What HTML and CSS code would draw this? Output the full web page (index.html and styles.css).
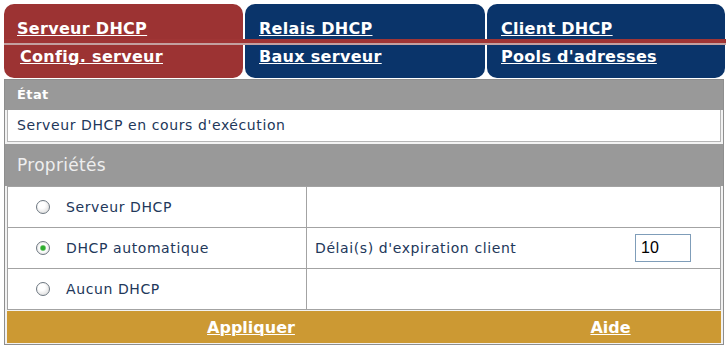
FILE: index.html
```html
<!DOCTYPE html>
<html lang="fr">
<head>
    <meta charset="UTF-8">
    <title>Serveur DHCP</title>
    <link rel="stylesheet" href="styles.css">
</head>
<body>

    <!-- Onglets -->
    <div class="tabs">
        <div class="tab tab-top tab-active"><a href="#">Serveur DHCP</a></div>
        <div class="tab tab-top"><a href="#">Relais DHCP</a></div>
        <div class="tab tab-top"><a href="#">Client DHCP</a></div>
        <div class="tab-line"></div>
        <div class="tab tab-sub tab-active tab-first"><a href="#">Config. serveur</a></div>
        <div class="tab tab-sub"><a href="#">Baux serveur</a></div>
        <div class="tab tab-sub"><a href="#">Pools d'adresses</a></div>
    </div>

    <div class="panel">
        <div class="section-head">État</div>
        <div class="status">Serveur DHCP en cours d'exécution</div>

        <div class="props-head">Propriétés</div>
        <table class="props">
            <colgroup>
                <col class="col-opt">
                <col>
            </colgroup>
            <tr>
                <td class="opt"><label><span class="radio"></span> Serveur DHCP</label></td>
                <td></td>
            </tr>
            <tr>
                <td class="opt"><label><span class="radio checked"></span> DHCP automatique</label></td>
                <td>
                    <div class="field">
                        <span>Délai(s) d'expiration client</span>
                        <input type="text" class="timeout" value="10">
                    </div>
                </td>
            </tr>
            <tr>
                <td class="opt"><label><span class="radio"></span> Aucun DHCP</label></td>
                <td></td>
            </tr>
        </table>

        <div class="actions">
            <a href="#">Appliquer</a>
            <a href="#" class="help">Aide</a>
        </div>
    </div>

</body>
</html>
```

FILE: styles.css
```css
/* Reset */
* {
    margin: 0;
    padding: 0;
    box-sizing: border-box;
}

body {
    font-family: 'DejaVu Sans', Verdana, sans-serif;
    background-color: #ffffff;
    color: #22375a;
    padding-top: 4px;
}

/* Onglets */
.tabs {
    margin-left: 4px;
    width: 720px;
    display: grid;
    grid-template-columns: 239px 240px 238px;
    grid-template-rows: 35px 6px 33px;
    column-gap: 2px;
}

.tab {
    background-color: #0a346a;
    font-weight: bold;
    font-size: 16px;
    line-height: 20px;
    letter-spacing: 0.3px;
    padding-left: 14px;
}

.tab a {
    color: #ffffff;
    text-decoration: underline;
    text-decoration-thickness: 1px;
}

.tab-active {
    background-color: #9c3333;
}

.tab-top {
    border-radius: 10px 10px 0 0;
    padding-top: 15px;
}

.tab-top.tab-active {
    padding-left: 13px;
}

.tab-sub {
    border-radius: 0 0 10px 10px;
    padding-top: 2px;
}

.tab-first {
    padding-left: 16px;
}

.tab-line {
    grid-column: 1 / -1;
    background-color: #a03535;
    border-bottom: 2px solid #c4a0a0;
    margin-right: -1px;
}

/* Panneau principal */
.panel {
    margin: 1px 0 0 4px;
    width: 720px;
    border: 1px solid #8e8e8e;
    background-color: #f2f2f2;
}

.section-head {
    background-color: #999999;
    color: #ffffff;
    font-weight: bold;
    font-size: 13px;
    letter-spacing: 0.4px;
    height: 30px;
    line-height: 30px;
    padding-left: 12px;
}

.status {
    margin: 0 2px 2px;
    background-color: #ffffff;
    border: 1px solid #b5b5b5;
    border-top: none;
    height: 32px;
    line-height: 31px;
    padding-left: 9px;
    font-size: 14px;
    letter-spacing: 0.6px;
}

.props-head {
    background-color: #999999;
    color: #eeeeee;
    font-size: 17px;
    letter-spacing: 0.3px;
    height: 42px;
    line-height: 42px;
    padding-left: 12px;
}

.props {
    margin: 0 2px;
    width: 714px;
    border-collapse: collapse;
    table-layout: fixed;
    background-color: #ffffff;
    font-size: 14px;
    letter-spacing: 0.6px;
}

.col-opt {
    width: 299px;
}

.props td {
    border: 1px solid #a3a3a3;
    height: 41px;
    padding: 0 29px 0 8px;
    vertical-align: middle;
}

.props td.opt {
    padding-left: 28px;
}

.props label {
    display: flex;
    align-items: center;
    gap: 16px;
}

/* Boutons radio */
.radio {
    display: block;
    flex: 0 0 14px;
    width: 14px;
    height: 14px;
    border: 1px solid #6e7882;
    border-radius: 50%;
    background: radial-gradient(circle at 40% 35%, #ffffff 30%, #d2d2d2);
}

.radio.checked {
    background: radial-gradient(circle, #2eae2e 0 2px, #9fd59f 2.8px, #ffffff 3.6px, #d4d4d4 100%);
}

.field {
    display: flex;
    align-items: center;
    justify-content: space-between;
}

.timeout {
    width: 56px;
    height: 28px;
    border: 1px solid #7f9db9;
    padding-left: 5px;
    font-family: 'Liberation Sans', Arial, sans-serif;
    font-size: 16px;
    color: #000000;
}

/* Barre d'actions */
.actions {
    margin: 1px 2px 1px;
    background-color: #cc9933;
    height: 32px;
    display: grid;
    grid-template-columns: 488px 1fr;
    align-items: center;
    text-align: center;
}

.actions a {
    color: #ffffff;
    font-weight: bold;
    font-size: 16px;
    text-decoration-thickness: 1px;
}

.actions .help {
    padding-left: 5px;
}
```
